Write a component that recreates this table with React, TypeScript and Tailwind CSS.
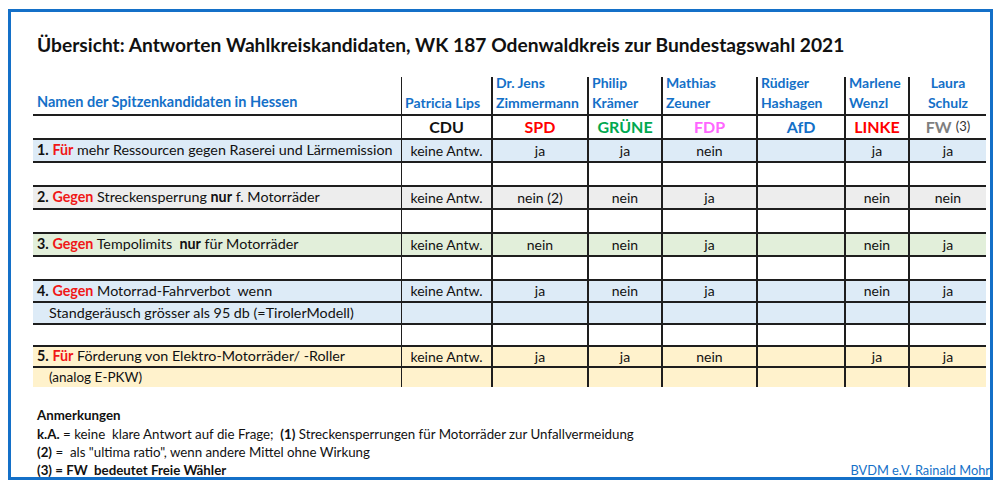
import React from "react";

const W = ["w-[369px]", "w-[91px]", "w-[96px]", "w-[74px]", "w-[95px]", "w-[88px]", "w-[64px]", "w-[76px]"];

const LINE = "border-[#1e1e1e]";

function cellBorder(i: number) {
  if (i === 7) return "";
  if (i === 0) return `border-r ${LINE}`;
  return `border-r-2 ${LINE}`;
}

const R = ({ children }: { children: React.ReactNode }) => (
  <span className="font-bold text-[#f01818]">{children}</span>
);
const B = ({ children }: { children: React.ReactNode }) => <span className="font-bold">{children}</span>;

type Row = {
  h: string;
  bg: string;
  q?: React.ReactNode;
  cells?: string[];
  last?: boolean;
};

const rows: Row[] = [
  {
    h: "h-[23px]",
    bg: "bg-[#ddebf7]",
    q: (
      <span>
        <B>1.</B> <R>Für</R> mehr Ressourcen gegen Raserei und Lärmemission
      </span>
    ),
    cells: ["keine Antw.", "ja", "ja", "nein", "", "ja", "ja"],
  },
  { h: "h-[24px]", bg: "bg-white" },
  {
    h: "h-[23px]",
    bg: "bg-[#ededed]",
    q: (
      <span>
        <B>2.</B> <R>Gegen</R> Streckensperrung <B>nur</B> f. Motorräder
      </span>
    ),
    cells: ["keine Antw.", "nein (2)", "nein", "ja", "", "nein", "nein"],
  },
  { h: "h-[24px]", bg: "bg-white" },
  {
    h: "h-[23px]",
    bg: "bg-[#e2efda]",
    q: (
      <span>
        <B>3.</B> <R>Gegen</R> Tempolimits{"  "}<B>nur</B> für Motorräder
      </span>
    ),
    cells: ["keine Antw.", "nein", "nein", "ja", "", "nein", "ja"],
  },
  { h: "h-[24px]", bg: "bg-white" },
  {
    h: "h-[22px]",
    bg: "bg-[#ddebf7]",
    q: (
      <span>
        <B>4.</B> <R>Gegen</R> Motorrad-Fahrverbot{"  "}wenn
      </span>
    ),
    cells: ["keine Antw.", "ja", "nein", "ja", "", "nein", "ja"],
  },
  {
    h: "h-[22px]",
    bg: "bg-[#ddebf7]",
    q: <span className="pl-[12px]">Standgeräusch grösser als 95 db (=TirolerModell)</span>,
  },
  { h: "h-[22px]", bg: "bg-white" },
  {
    h: "h-[21px]",
    bg: "bg-[#fff2cc]",
    q: (
      <span>
        <B>5.</B> <R>Für</R> Förderung von Elektro-Motorräder/ -Roller
      </span>
    ),
    cells: ["keine Antw.", "ja", "ja", "nein", "", "ja", "ja"],
  },
  {
    h: "h-[19px]",
    bg: "bg-[#fff2cc]",
    q: <span className="pl-[12px] text-[13.5px]">(analog E-PKW)</span>,
    last: true,
  },
];

const names: { lines: string[]; center?: boolean }[] = [
  { lines: ["Patricia Lips"] },
  { lines: ["Dr. Jens", "Zimmermann"] },
  { lines: ["Philip", "Krämer"] },
  { lines: ["Mathias", "Zeuner"] },
  { lines: ["Rüdiger", "Hashagen"] },
  { lines: ["Marlene", "Wenzl"] },
  { lines: ["Laura", "Schulz"], center: true },
];

export default function App() {
  return (
    <div className="w-[1000px] h-[491px] bg-white pt-[9px] pl-[8px] font-['Lato',sans-serif] text-[#111]">
      <div className="w-[985px] h-[471px] border-[3px] border-[#1470c8] pl-[22px] pr-[4px]">
        <h1 className="mt-[21px] pl-[4px] text-[19.2px] font-bold leading-[24px] text-[#111] whitespace-nowrap">
          Übersicht: Antworten Wahlkreiskandidaten, WK 187 Odenwaldkreis zur Bundestagswahl 2021
        </h1>

        <div className="mt-[20px] w-[953px] text-[14px]">
          {/* names */}
          <div className={`flex h-[39px] border-b-2 ${LINE}`}>
            <div className={`${W[0]} ${cellBorder(0)} flex items-end pl-[4px] pb-[2px] text-[14.5px] font-bold text-[#1470c8] leading-[20px]`}>
              Namen der Spitzenkandidaten in Hessen
            </div>
            {names.map((n, i) => (
              <div
                key={i}
                className={`${W[i + 1]} ${cellBorder(i + 1)} flex flex-col justify-end pb-[1px] font-bold text-[#1470c8] leading-[20px] whitespace-nowrap ${
                  n.center ? "items-center" : "items-start pl-[3px]"
                }`}
              >
                {n.lines.map((l) => (
                  <span key={l}>{l}</span>
                ))}
              </div>
            ))}
          </div>

          {/* parties */}
          <div className={`flex h-[24px] border-b-2 ${LINE} text-[16px] font-bold`}>
            <div className={`${W[0]} ${cellBorder(0)}`} />
            <div className={`${W[1]} ${cellBorder(1)} flex items-center justify-center text-[#111]`}>CDU</div>
            <div className={`${W[2]} ${cellBorder(2)} flex items-center justify-center text-[#ff0000]`}>SPD</div>
            <div className={`${W[3]} ${cellBorder(3)} flex items-center justify-center text-[#00a84f]`}>GRÜNE</div>
            <div className={`${W[4]} ${cellBorder(4)} flex items-center justify-center text-[#ff66ff]`}>FDP</div>
            <div className={`${W[5]} ${cellBorder(5)} flex items-center justify-center text-[#1470c8]`}>AfD</div>
            <div className={`${W[6]} ${cellBorder(6)} flex items-center justify-center text-[#ff0000]`}>LINKE</div>
            <div className={`${W[7]} flex items-center justify-center text-[#7f7f7f]`}>
              FW<span className="ml-[4px] text-[13px] font-normal text-[#333]">(3)</span>
            </div>
          </div>

          {/* questions */}
          {rows.map((r, ri) => (
            <div key={ri} className={`flex ${r.h} ${r.bg} ${r.last ? "" : `border-b-2 ${LINE}`}`}>
              <div className={`${W[0]} ${cellBorder(0)} flex items-center pl-[4px] text-[14.3px] whitespace-pre leading-none`}>
                {r.q}
              </div>
              {W.slice(1).map((w, ci) => (
                <div
                  key={ci}
                  className={`${w} ${cellBorder(ci + 1)} flex items-center justify-center leading-none`}
                >
                  {r.cells ? r.cells[ci] : ""}
                </div>
              ))}
            </div>
          ))}
        </div>

        {/* notes */}
        <div className="mt-[19px] mr-[-4px] pl-[4px] text-[13.3px] leading-[18.5px] text-[#111]">
          <div className="font-bold">Anmerkungen</div>
          <div className="whitespace-pre">
            <B>k.A.</B> = keine  klare Antwort auf die Frage;  <B>(1)</B> Streckensperrungen für Motorräder zur Unfallvermeidung
          </div>
          <div className="whitespace-pre">
            <B>(2)</B> =  als "ultima ratio", wenn andere Mittel ohne Wirkung
          </div>
          <div className="flex justify-between leading-[17px]">
            <span className="font-bold whitespace-pre">(3) = FW  bedeutet Freie Wähler</span>
            <span className="text-[#1470c8] text-[12.8px]">BVDM e.V. Rainald Mohr</span>
          </div>
        </div>
      </div>
    </div>
  );
}
